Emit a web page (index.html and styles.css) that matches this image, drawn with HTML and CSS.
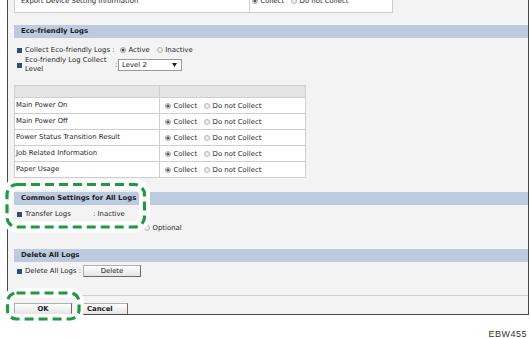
FILE: index.html
```html
<!DOCTYPE html>
<html>
<head>
<meta charset="utf-8">
<link rel="stylesheet" href="styles.css">
</head>
<body>
<div class="frame">
  <div class="export-row">
    <div class="ec1">Export Device Setting Information</div>
    <div class="ec2 opt"><span class="rb on"></span><span class="ol">Collect</span><span class="rb"></span><span>Do not Collect</span></div>
  </div>

  <div class="sec-head eco-head">Eco-friendly Logs</div>
  <div class="field f-collect">
    <span class="bullet"></span>
    <span class="lbl w-collect">Collect Eco-friendly Logs :</span>
    <span class="opt"><span class="rb on"></span><span class="ol">Active</span><span class="rb"></span><span>Inactive</span></span>
  </div>
  <div class="field f-level">
    <span class="bullet"></span>
    <span class="lbl w-level">Eco-friendly Log Collect Level</span>
    <span class="colon">:</span>
    <span class="select">Level 2<svg class="arrow" width="5" height="4" viewBox="0 0 5 4"><path d="M0 0H5L2.5 4Z" fill="#222"/></svg></span>
  </div>

  <div class="tbl">
    <div class="tr th"><div class="td1"></div><div class="td2"></div></div>
    <div class="tr"><div class="td1">Main Power On</div><div class="td2 opt"><span class="rb on"></span><span class="ol">Collect</span><span class="rb"></span><span>Do not Collect</span></div></div>
    <div class="tr"><div class="td1">Main Power Off</div><div class="td2 opt"><span class="rb on"></span><span class="ol">Collect</span><span class="rb"></span><span>Do not Collect</span></div></div>
    <div class="tr"><div class="td1">Power Status Transition Result</div><div class="td2 opt"><span class="rb on"></span><span class="ol">Collect</span><span class="rb"></span><span>Do not Collect</span></div></div>
    <div class="tr"><div class="td1">Job Related Information</div><div class="td2 opt"><span class="rb on"></span><span class="ol">Collect</span><span class="rb"></span><span>Do not Collect</span></div></div>
    <div class="tr"><div class="td1">Paper Usage</div><div class="td2 opt"><span class="rb on"></span><span class="ol">Collect</span><span class="rb"></span><span>Do not Collect</span></div></div>
  </div>

  <div class="sec-head common-head">Common Settings for All Logs</div>
  <div class="field f-transfer">
    <span class="bullet"></span>
    <span class="lbl w-transfer">Transfer Logs</span>
    <span>: Inactive</span>
  </div>
  <div class="field f-optional">
    <span class="opt"><span class="rb"></span><span>Optional</span></span>
  </div>

  <div class="sec-head delete-head">Delete All Logs</div>
  <div class="field f-delete">
    <span class="bullet"></span>
    <span class="lbl w-delete">Delete All Logs :</span>
    <span class="btn btn-delete">Delete</span>
  </div>

  <div class="sep"></div>
  <div class="actions">
    <span class="btn btn-ok">OK</span>
    <span class="btn btn-cancel">Cancel</span>
  </div>
</div>
<div class="code">EBW455</div>

<svg class="hl" width="530" height="338" viewBox="0 0 530 338">
  <rect x="7" y="184.5" width="137.5" height="42.5" rx="10" fill="none" stroke="#fff" stroke-width="11"/>
  <rect x="7.5" y="293" width="71.5" height="26" rx="9" fill="none" stroke="#fff" stroke-width="10"/>
  <rect x="7" y="184.5" width="137.5" height="42.5" rx="10" fill="none" stroke="#1e9a40" stroke-width="3.2" stroke-dasharray="9 5"/>
  <rect x="7.5" y="293" width="71.5" height="26" rx="9" fill="none" stroke="#1e9a40" stroke-width="3.2" stroke-dasharray="9 5"/>
</svg>
</body>
</html>
```

FILE: styles.css
```css
* { box-sizing: border-box; margin: 0; padding: 0; }
html, body { background: #fff; }
body {
  width: 530px;
  height: 338px;
  overflow: hidden;
  position: relative;
  font-family: "DejaVu Sans", Verdana, sans-serif;
  font-size: 6.9px;
  color: #1e1e1e;
}

.frame {
  margin-left: 7px;
  margin-top: -6px;
  width: 522px;
  border: 1px solid #4a4a4a;
  border-top: none;
  background: #f3f3f3;
  padding-left: 6px;
  display: flex;
  flex-direction: column;
}

.export-row {
  display: flex;
  width: 379px;
  height: 19px;
  background: #fff;
  border: 1px solid #cdcdcd;
  border-top: none;
}
.ec1 {
  width: 235px;
  border-right: 1px solid #cdcdcd;
  padding: 1px 0 0 6px;
  line-height: 12px;
}
.ec2 { padding-left: 2px; height: 13px; }

.opt { display: flex; align-items: center; }
.rb {
  display: inline-block;
  width: 6px;
  height: 6px;
  border-radius: 50%;
  border: 1px solid #b4b4b4;
  background: #ececec;
  margin-right: 2.5px;
  flex: none;
}
.rb.on { background: radial-gradient(circle, #555 0 1.3px, #e2e2e2 1.7px); border-color: #a8a8a8; }
.ol { margin-right: 7px; }

.sec-head {
  height: 13px;
  line-height: 13px;
  background: #bccbe0;
  font-weight: bold;
  padding-left: 7px;
  color: #1a1a1a;
}
.eco-head { margin-top: 12px; }
.common-head { margin-top: 14px; }
.delete-head { margin-top: 16px; }

.field { display: flex; align-items: center; }
.bullet {
  width: 5px;
  height: 5px;
  background: #2f4c7c;
  margin: 0 3px 0 3px;
  flex: none;
}
.f-collect { margin-top: 7px; height: 10px; line-height: 10px; }
.w-collect { width: 95px; }
.f-level { margin-top: 1px; }
.w-level { width: 86px; line-height: 9px; }
.colon { margin-left: 4px; width: 3px; }
.select {
  display: flex;
  align-items: center;
  justify-content: space-between;
  width: 64px;
  height: 12px;
  background: #fff;
  border: 1px solid #9a9a9a;
  padding: 0 4px 0 3px;
}
.arrow { display: block; }

.tbl {
  width: 292px;
  margin-top: 11px;
  border: 1px solid #cfcfcf;
  background: #fff;
}
.tr { display: flex; height: 16px; border-top: 1px solid #cfcfcf; }
.tr.th { height: 11px; border-top: none; background: #e4e4e4; }
.td1 {
  width: 145px;
  border-right: 1px solid #cfcfcf;
  padding-left: 1px;
  line-height: 15px;
}
.td2 { padding-left: 5px; }

.f-transfer { margin-top: 4px; height: 10px; line-height: 10px; }
.w-transfer { width: 68px; }
.f-optional { margin-top: 4px; height: 10px; line-height: 10px; padding-left: 130px; }

.f-delete { margin-top: 3px; height: 12px; }
.w-delete { width: 58px; white-space: nowrap; }

.btn {
  display: flex;
  align-items: center;
  justify-content: center;
  height: 12px;
  background: linear-gradient(#ffffff, #e4e4e4);
  border: 1px solid;
  border-color: #b0b0b0 #6a6a6a #6a6a6a #b0b0b0;
  color: #1a1a1a;
  flex: none;
}
.btn-delete { width: 58px; }

.sep {
  height: 1px;
  background: #cfcfcf;
  margin: 18px 0 0 -6px;
}
.actions { display: flex; margin-top: 7px; }
.btn-ok, .btn-cancel { height: 11px; font-weight: bold; border-bottom: none; }
.btn-ok { width: 58px; }
.btn-cancel { width: 45px; margin-left: 11px; justify-content: flex-start; padding-left: 3px; }

.code {
  margin-top: 14px;
  text-align: right;
  padding-right: 3px;
  font-family: "Liberation Sans", Arial, sans-serif;
  font-size: 9px;
  letter-spacing: 0.5px;
  line-height: 10px;
  color: #333;
}

.hl { position: absolute; left: 0; top: 0; pointer-events: none; }
```
